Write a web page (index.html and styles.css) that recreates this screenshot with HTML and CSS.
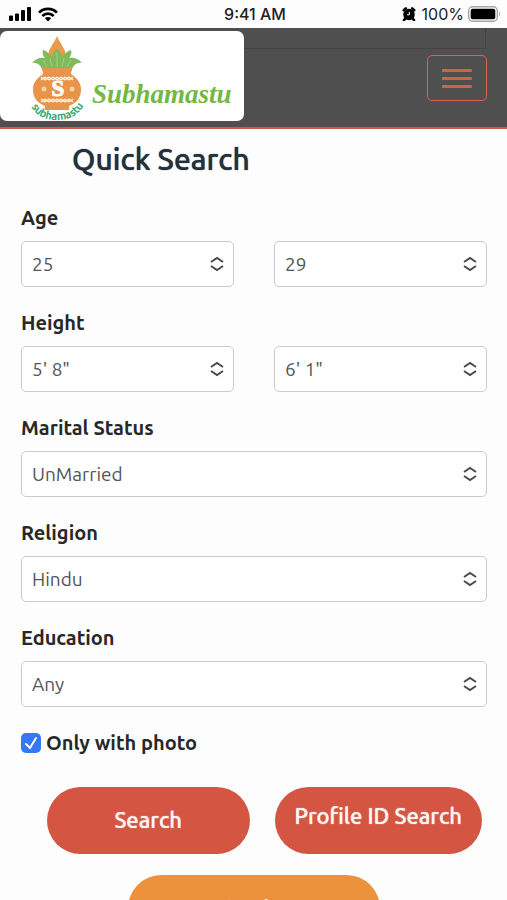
FILE: index.html
```html
<!DOCTYPE html>
<html lang="en">
<head>
<meta charset="utf-8">
<meta name="viewport" content="width=device-width, initial-scale=1">
<title>Subhamastu - Quick Search</title>
<link rel="stylesheet" href="styles.css">
</head>
<body>
<div class="page">
  <div class="status">
    <div class="status-left">
      <svg width="23" height="14" viewBox="0 0 23 14" aria-hidden="true"><path fill="#000" d="M0 9.500q0-1 1-1h2q1 0 1 1V13q0 1-1 1H1q-1 0-1-1zM6 7.500q0-1 1-1h2q1 0 1 1V13q0 1-1 1H7q-1 0-1-1zM12 4q0-1 1-1h2q1 0 1 1v9q0 1-1 1h-2q-1 0-1-1zM18 1q0-1 1-1h2q1 0 1 1v12q0 1-1 1h-2q-1 0-1-1z"/></svg>
      <svg width="20" height="15" viewBox="0 0 20 15" aria-hidden="true"><g fill="none" stroke="#000" stroke-width="2.600"><path d="M1 5.600a12.700 12.700 0 0 1 18 0"/><path d="M4.300 9a8.100 8.100 0 0 1 11.400 0"/></g><path d="M6.800 11.300a4.600 4.600 0 0 1 6.400 0L10 14.600z"/></svg>
    </div>
    <div class="clock">9:41 AM</div>
    <div class="status-right">
      <svg width="14" height="14" viewBox="0 0 14 14" aria-hidden="true"><circle cx="7" cy="7.500" r="5.800"/><path d="M1.800 3.200 3.800 1.400M10.200 1.400l2 1.800M3 12l-1 1.200M11 12l1 1.200" stroke="#000" stroke-width="2.600" stroke-linecap="round"/><path d="M7.300 4.800v3H5" stroke="#fff" stroke-width="1" fill="none"/></svg>
      <span>100%</span>
      <svg width="33" height="16" viewBox="0 0 33 16" aria-hidden="true"><rect x=".7" y=".7" width="28.600" height="14.600" rx="4" fill="#fff" stroke="#a5a5a5" stroke-width="1.400"/><rect x="2.700" y="2.700" width="24.600" height="10.600" rx="2"/><path d="M31 5.500q2 2.500 0 5z" fill="#a5a5a5"/></svg>
    </div>
  </div>
  <header class="header">
    <a class="brand" href="#">
      <svg class="emblem" width="60" height="90" viewBox="0 0 60 90" role="img" aria-label="Subhamastu emblem">
        <path fill="#e99a4a" d="M29 5c2 6 9 13 9 20v5H20v-5c0-7 7-14 9-20z"/>
        <path fill="#7fbb5e" d="M14 38C12 33 8 31 4 32c3-4 8-6 13-5-2-2-3-5-2-8 4 1 7 4 9 8 0-4 2-7 5-9 3 2 5 5 5 9 2-4 5-7 9-8 1 3 0 6-2 8 5-1 10 1 13 5-4-1-8 1-10 6z"/>
        <path d="M22 27l2 9M29 21v15M36 27l-2 9M15 29l4 7M43 29l-4 7" stroke="#a1d075" fill="none"/>
        <path fill="#e8954b" d="M15 37h28v6c6 4 10 9 10 15 0 10-5 14-12 17v4H17v-4C10 72 5 68 5 58c0-6 4-11 10-15z"/>
        <path d="M16 39h26" stroke="#e8954b" stroke-width="4" stroke-linecap="round"/>
        <path fill="none" stroke="#fff6e9" stroke-width="1.100" d="m13 46 2 2 2-2 2 2 2-2 2 2 2-2 2 2 2-2 2 2 2-2 2 2 2-2 2 2 2-2 2 2 2-2M13 49l2-2 2 2 2-2 2 2 2-2 2 2 2-2 2 2 2-2 2 2 2-2 2 2 2-2 2 2 2-2 2 2M13 68l2 2 2-2 2 2 2-2 2 2 2-2 2 2 2-2 2 2 2-2 2 2 2-2 2 2 2-2 2 2 2-2M13 71l2-2 2 2 2-2 2 2 2-2 2 2 2-2 2 2 2-2 2 2 2-2 2 2 2-2 2 2 2-2 2 2"/>
        <g fill="#f7cf9c"><circle cx="16" cy="58" r="2.500"/><circle cx="44" cy="58" r="2.500"/></g>
        <text class="emblem-s" x="30" y="65" text-anchor="middle">S</text>
        <path id="arc" fill="none" d="M2 73Q9 89 29 89Q49 89 57 72"/>
        <text class="emblem-name"><textPath href="#arc" startOffset="50%" text-anchor="middle">subhamastu</textPath></text>
      </svg>
      <span class="wordmark">Subhamastu</span>
    </a>
    <button class="menu" type="button" aria-label="Menu"><span></span><span></span><span></span></button>
  </header>
  <form class="form">
    <h1>Quick Search</h1>
    <div class="group">
      <label for="age-from">Age</label>
      <div class="pair">
        <div class="select"><select id="age-from"><option>25</option></select><svg viewBox="0 0 14 16" aria-hidden="true"><path d="m1 6 6-4 6 4M1 10l6 4 6-4"/></svg></div>
        <div class="select"><select aria-label="Age to"><option>29</option></select><svg viewBox="0 0 14 16" aria-hidden="true"><path d="m1 6 6-4 6 4M1 10l6 4 6-4"/></svg></div>
      </div>
    </div>
    <div class="group">
      <label for="height-from">Height</label>
      <div class="pair">
        <div class="select"><select id="height-from"><option>5' 8"</option></select><svg viewBox="0 0 14 16" aria-hidden="true"><path d="m1 6 6-4 6 4M1 10l6 4 6-4"/></svg></div>
        <div class="select"><select aria-label="Height to"><option>6' 1"</option></select><svg viewBox="0 0 14 16" aria-hidden="true"><path d="m1 6 6-4 6 4M1 10l6 4 6-4"/></svg></div>
      </div>
    </div>
    <div class="group">
      <label for="marital">Marital Status</label>
      <div class="select"><select id="marital"><option>UnMarried</option></select><svg viewBox="0 0 14 16" aria-hidden="true"><path d="m1 6 6-4 6 4M1 10l6 4 6-4"/></svg></div>
    </div>
    <div class="group">
      <label for="religion">Religion</label>
      <div class="select"><select id="religion"><option>Hindu</option></select><svg viewBox="0 0 14 16" aria-hidden="true"><path d="m1 6 6-4 6 4M1 10l6 4 6-4"/></svg></div>
    </div>
    <div class="group">
      <label for="education">Education</label>
      <div class="select"><select id="education"><option>Any</option></select><svg viewBox="0 0 14 16" aria-hidden="true"><path d="m1 6 6-4 6 4M1 10l6 4 6-4"/></svg></div>
    </div>
    <div class="check">
      <span class="box"><input type="checkbox" id="photo" checked><svg viewBox="0 0 20 20" aria-hidden="true"><path d="m5 11 4 4 6-10"/></svg></span>
      <label for="photo">Only with photo</label>
    </div>
    <div class="actions">
      <button class="btn" type="submit">Search</button>
      <a class="btn btn-profile" href="#">Profile ID Search</a>
    </div>
    <a class="btn btn-login" href="#">Login</a>
  </form>
</div>
</body>
</html>
```
FILE: styles.css
```css
* { box-sizing: border-box; }
body { margin: 0; background: #fdfdfd; color: #282828; font-family: Ubuntu, "Noto Sans", sans-serif; }
.page { height: 100vh; overflow: hidden; }

.status { display: grid; grid-template-columns: 1fr auto 1fr; align-items: center; height: 28px; padding: 0 6px 0 9px; color: #222; font: 500 16px/20px Inter, "Liberation Sans", sans-serif; }
.status-left, .status-right { display: flex; align-items: center; gap: 6px; }
.status-right { justify-content: flex-end; font-weight: 400; }
.status-right span { margin-right: -2px; }

.header { position: relative; display: flex; justify-content: space-between; align-items: flex-start; height: 101px; padding: 3px 20px 0 0; background: #4f4f4f; border-bottom: 2px solid #d1584a; }
.header::before { content: ""; position: absolute; top: 0; left: 0; right: 21px; height: 20px; border: solid #434343; border-width: 0 1px 1px 0; }
.brand { position: relative; display: flex; align-items: flex-end; width: 244px; height: 90px; padding-left: 28px; background: #fff; border-radius: 7px; text-decoration: none; }
.emblem { overflow: visible; }
.emblem-s { font: bold 23px "Liberation Serif", serif; fill: #fff; stroke: #fff; }
.emblem-name { font: 700 11px Ubuntu, "Noto Sans", sans-serif; fill: #35a878; }
.wordmark { margin: 0 0 11px 4px; color: #72b843; font: italic 700 27px/32px "Liberation Serif", serif; }
.menu { display: flex; flex-direction: column; align-items: center; justify-content: center; gap: 5px; width: 60px; height: 46px; margin-top: 24px; padding: 0; background: transparent; border: 1px solid #d9614f; border-radius: 5px; }
.menu span { width: 30px; height: 3px; border-radius: 1px; background: #d1604f; }

.form { padding: 12px 20px 0 21px; }
h1 { margin: 0 0 26px 51px; color: #25303a; font-size: 30px; line-height: 36px; font-weight: 500; text-shadow: 0 0 1px currentColor; }
.group { margin-bottom: 21px; }
.group label { display: block; margin-bottom: 8px; font-size: 20px; line-height: 30px; font-weight: 700; }
.pair { display: grid; grid-template-columns: 1fr 1fr; gap: 40px; }
.select { position: relative; }
select { display: block; width: 100%; height: 46px; padding: 0 10px; appearance: none; background: #fff; border: 1px solid #cbcbcb; border-radius: 5px; color: #555; font: 400 19px/26px Ubuntu, "Noto Sans", sans-serif; }
.select svg { position: absolute; right: 10px; top: 15px; width: 14px; height: 16px; fill: none; stroke: #4a4a4a; stroke-width: 2; pointer-events: none; }
.check { display: flex; align-items: center; gap: 5px; font-size: 20px; line-height: 30px; font-weight: 700; }
.box { display: grid; width: 20px; height: 20px; }
.box input, .box svg { grid-area: 1 / 1; width: 20px; height: 20px; margin: 0; }
.box input { appearance: none; background: #3478f6; border-radius: 5px; }
.box svg { fill: none; stroke: #fff; stroke-width: 2; stroke-linecap: round; pointer-events: none; }
.actions { display: grid; grid-template-columns: 203fr 208fr; gap: 25px; margin: 29px 5px 0 26px; }
.btn { display: flex; align-items: center; justify-content: center; height: 67px; padding: 0 0 2px; border: 0; border-radius: 34px; background: #d35542; color: #fff5f0; font: 500 22px/30px Ubuntu, "Noto Sans", sans-serif; text-decoration: none; text-shadow: 0 0 1px currentColor; }
.btn-profile { padding-bottom: 10px; }
.btn-login { width: 54%; margin: 21px auto 0; background: #ed923c; }
```
